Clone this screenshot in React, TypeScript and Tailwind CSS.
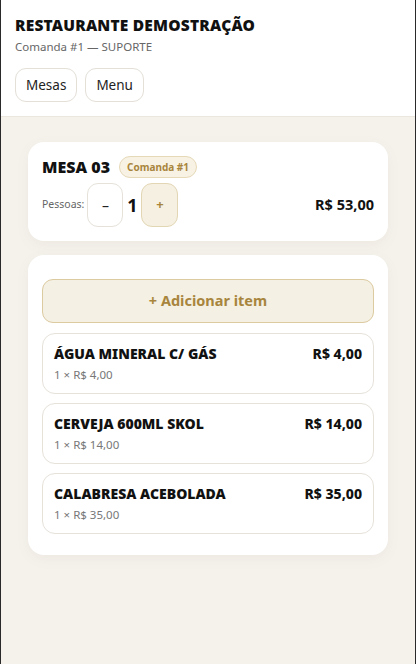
import React from "react";

const items = [
  { name: "ÁGUA MINERAL C/ GÁS", total: "R$ 4,00", sub: "1 × R$ 4,00" },
  { name: "CERVEJA 600ML SKOL", total: "R$ 14,00", sub: "1 × R$ 14,00" },
  { name: "CALABRESA ACEBOLADA", total: "R$ 35,00", sub: "1 × R$ 35,00" },
];

export default function App() {
  return (
    <div
      className="w-[416px] h-[664px] bg-[#f5f2ec] border-x border-[#2a2a2a] flex flex-col overflow-hidden"
      style={{ fontFamily: '"Noto Sans", "Open Sans", sans-serif' }}
    >
      <header className="bg-white border-b border-[#ebe7df] px-[14px] pt-[14px] pb-[14px] flex flex-col">
        <h1 className="text-[15.5px] leading-[22px] font-black tracking-[0.2px] text-[#111]">
          RESTAURANTE DEMOSTRAÇÃO
        </h1>
        <p className="text-[11.5px] leading-[16px] text-[#666] mt-[3px]">Comanda #1 — SUPORTE</p>
        <div className="flex gap-[8px] mt-[13px]">
          <button className="h-[34px] px-[10px] rounded-[11px] border border-[#e4e0d8] bg-white text-[13.5px] text-[#222]">
            Mesas
          </button>
          <button className="h-[34px] px-[10px] rounded-[11px] border border-[#e4e0d8] bg-white text-[13.5px] text-[#222]">
            Menu
          </button>
        </div>
      </header>

      <main className="px-[27px] pt-[25px] flex flex-col gap-[14px]">
        <section className="bg-white rounded-[16px] px-[14px] pt-[14px] pb-[14px] shadow-[0_4px_14px_rgba(120,100,60,0.06)]">
          <div className="flex items-center gap-[9px]">
            <h2 className="text-[16px] leading-[22px] font-black text-[#111]">MESA 03</h2>
            <span className="h-[22px] px-[7px] rounded-full bg-[#f8f2e4] border border-[#e6d9b8] text-[10px] font-bold text-[#a8853d] flex items-center">
              Comanda #1
            </span>
          </div>
          <div className="flex items-center mt-[5px]">
            <span className="text-[10.5px] text-[#666] mr-[3px]">Pessoas:</span>
            <button className="w-[36px] h-[44px] rounded-[11px] border border-[#e6e2da] bg-white text-[14px] text-[#222] flex items-center justify-center">
              –
            </button>
            <span className="w-[18px] text-center text-[18px] font-bold text-[#111]">1</span>
            <button className="w-[37px] h-[44px] rounded-[11px] border border-[#e3d6b4] bg-[#f5f0e2] text-[13px] font-bold text-[#a8853d] flex items-center justify-center">
              +
            </button>
            <span className="ml-auto text-[14.5px] font-bold text-[#111]">R$ 53,00</span>
          </div>
        </section>

        <section className="bg-white rounded-[16px] px-[14px] pt-[24px] pb-[21px] flex flex-col gap-[9px] shadow-[0_4px_14px_rgba(120,100,60,0.06)]">
          <button className="h-[44px] rounded-[11px] border border-[#dccaa0] bg-[#f4f0e3] text-[14.5px] font-bold text-[#a8853d] mb-[1px]">
            + Adicionar item
          </button>
          {items.map((it) => (
            <div
              key={it.name}
              className="h-[61px] rounded-[13px] border border-[#e6e2da] bg-white px-[11px] pt-[10px] flex flex-col"
            >
              <div className="flex justify-between items-center">
                <span className="text-[14px] leading-[20px] font-black text-[#111]">{it.name}</span>
                <span className="text-[14px] leading-[20px] font-extrabold text-[#111]">{it.total}</span>
              </div>
              <span className="text-[11.5px] leading-[18px] text-[#777] mt-[2px]">{it.sub}</span>
            </div>
          ))}
        </section>
      </main>
    </div>
  );
}
